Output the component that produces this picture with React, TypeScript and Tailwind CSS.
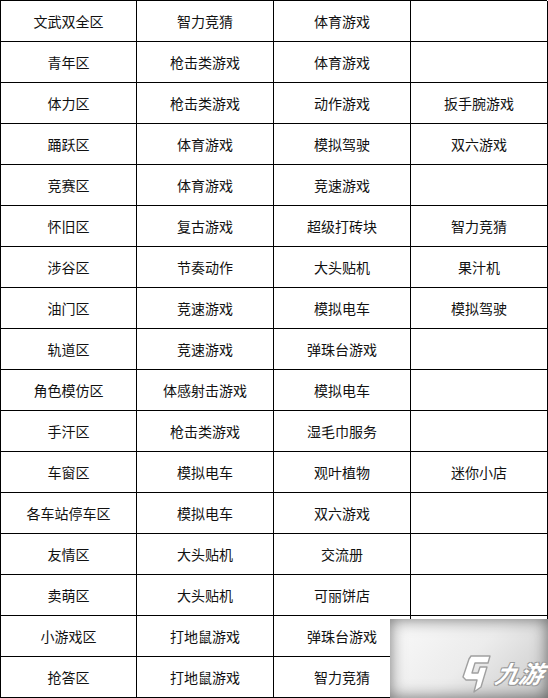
const rows: string[][] = [
  ['文武双全区', '智力竞猜', '体育游戏', ''],
  ['青年区', '枪击类游戏', '体育游戏', ''],
  ['体力区', '枪击类游戏', '动作游戏', '扳手腕游戏'],
  ['踊跃区', '体育游戏', '模拟驾驶', '双六游戏'],
  ['竞赛区', '体育游戏', '竞速游戏', ''],
  ['怀旧区', '复古游戏', '超级打砖块', '智力竞猜'],
  ['涉谷区', '节奏动作', '大头贴机', '果汁机'],
  ['油门区', '竞速游戏', '模拟电车', '模拟驾驶'],
  ['轨道区', '竞速游戏', '弹珠台游戏', ''],
  ['角色模仿区', '体感射击游戏', '模拟电车', ''],
  ['手汗区', '枪击类游戏', '湿毛巾服务', ''],
  ['车窗区', '模拟电车', '观叶植物', '迷你小店'],
  ['各车站停车区', '模拟电车', '双六游戏', ''],
  ['友情区', '大头贴机', '交流册', ''],
  ['卖萌区', '大头贴机', '可丽饼店', ''],
  ['小游戏区', '打地鼠游戏', '弹珠台游戏', ''],
  ['抢答区', '打地鼠游戏', '智力竞猜', '']
]

const Watermark = () => (
  <div className="absolute left-[390px] top-[619px] flex h-[79px] w-[158px] items-end justify-end bg-[linear-gradient(135deg,#fafafa_0%,#ececec_50%,#c8c8c8_100%)] pb-[5px] pr-[4px] shadow-[inset_0_0_16px_rgba(0,0,0,0.55)]">
    <div className="flex items-center gap-[5px]">
      <svg width="30" height="40" viewBox="0 0 30 40" fill="none">
        <path
          d="M10 3 L29 3 L27 10 L14 10 L11 20 L17 20 L19 14 L26 14 L20 34 L13 39 L16 27 L5 27 L2 24 L8 6 Z"
          fill="#ffffff"
          stroke="#a0a0a0"
          strokeWidth="1.4"
          strokeLinejoin="round"
        />
      </svg>
      <span className="-skew-x-12 font-['Noto_Sans_CJK_SC',sans-serif] text-[24px] font-bold italic leading-none text-white [text-shadow:1px_1px_0_#999,-1px_-1px_0_#999,1px_-1px_0_#999,-1px_1px_0_#999]">
        九游
      </span>
    </div>
  </div>
)

export default function App() {
  return (
    <div className="relative h-[698px] w-[548px] overflow-hidden bg-white font-['Microsoft_YaHei','Noto_Sans_CJK_SC',sans-serif] text-[14px] text-[#111]">
      <div className="grid w-[547px] grid-cols-[136px_137px_137px_137px] border-l border-t border-black">
        {rows.map((row, i) =>
          row.map((cell, j) => (
            <div
              key={`${i}-${j}`}
              className="flex h-[41px] items-center justify-center border-b border-r border-black pt-[1px]"
            >
              {cell}
            </div>
          ))
        )}
      </div>
      <Watermark />
    </div>
  )
}
